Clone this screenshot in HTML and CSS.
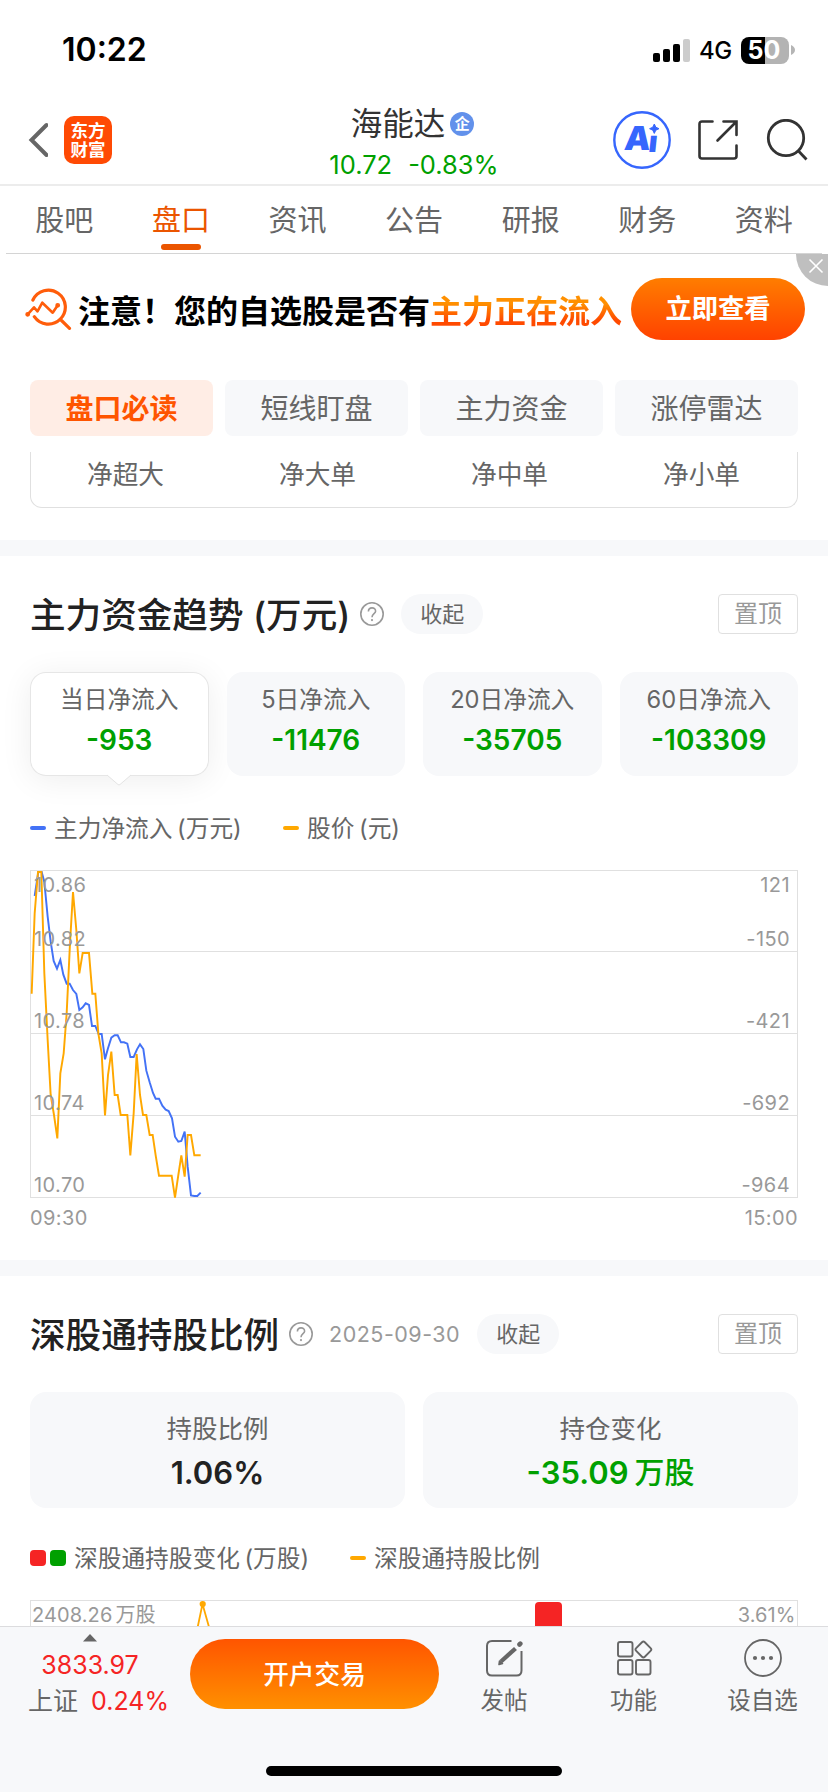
FILE: index.html
```html
<!DOCTYPE html>
<html lang="zh-CN">
<head>
<meta charset="utf-8">
<title>海能达</title>
<link rel="stylesheet" href="styles.css">
</head>
<body>
<div class="app">
  <div class="status">
    <span class="clock">10:22</span>
    <div class="status-right">
      <svg class="signal" width="38" height="24" viewBox="0 0 38 24"><rect x="0" y="14" width="7" height="9" rx="2"/><rect x="10" y="10" width="7" height="13" rx="2"/><rect x="20" y="5" width="7" height="18" rx="2"/><rect x="30" y="0" width="7" height="23" rx="2" fill="#ccc"/></svg>
      <span class="net">4G</span>
      <span class="battery">50</span>
      <svg class="tip" width="4" height="10" viewBox="0 0 4 10"><path d="M0 0Q4 2 4 5T0 10z" fill="#b5b5b5"/></svg>
    </div>
  </div>

  <header class="nav">
    <div class="nav-left">
      <svg width="20" height="36" viewBox="0 0 20 36" fill="none" stroke="#666" stroke-width="4" stroke-linecap="round"><path d="M18.500 3L3.500 18 18.500 33" stroke-linejoin="miter"/></svg>
      <div class="logo"><span>东方</span><span>财富</span></div>
    </div>
    <div class="nav-title">
      <div class="name">海能达<span class="badge">企</span></div>
      <div class="quote"><span>10.72</span><span>-0.83%</span></div>
    </div>
    <div class="nav-right">
      <svg class="ai" width="58" height="58" viewBox="0 0 58 58"><circle cx="29" cy="29" r="27.700" fill="#fff" stroke="#3666fd" stroke-width="2.400"/><text class="ai-text" transform="translate(10.500 39) skewX(-6)"><tspan x="0">A</tspan><tspan class="ai-i" x="24.500" dy="1.500">ı</tspan></text><path d="M41.300 13l1.500 3.200 3.200 1.500-3.200 1.500-1.500 3.200-1.500-3.200-3.200-1.500 3.200-1.500z" fill="#3666fd" stroke="#3666fd" stroke-linejoin="round"/></svg>
      <svg class="share" width="40" height="40" viewBox="0 0 40 40" fill="none" stroke="#333" stroke-width="2.600" stroke-linecap="round"><path d="M14.500 1.500H4Q1.500 1.500 1.500 4V36Q1.500 38.500 4 38.500H36Q38.500 38.500 38.500 36V25.500M25.500 1.500H38.500V15M38 2L19.500 20.500"/></svg>
      <svg class="search" width="42" height="42" viewBox="0 0 42 42" fill="none" stroke="#333" stroke-width="2.800"><circle cx="20" cy="19" r="17.700"/><path d="M32.500 32L40.500 40.500"/></svg>
    </div>
  </header>

  <nav class="tabs">
    <span>股吧</span><span class="on">盘口</span><span>资讯</span><span>公告</span><span>研报</span><span>财务</span><span>资料</span>
  </nav>

  <div class="banner">
    <svg class="scan" width="47" height="44" viewBox="0 0 47 44" fill="none" stroke="#ff5d0b" stroke-width="3.200" stroke-linecap="round"><path d="M7.900 12A17 17 0 1 1 9.300 28.700M35.500 31.500L44.500 40.300"/><path d="M2.700 26.300L9 19.300l3.500 4L17.300 14.700l10.400 10L32.700 17.300" stroke-width="2.600" stroke-linejoin="round"/><circle cx="2.700" cy="26.300" r=".8"/><circle cx="32.700" cy="17.300" r=".8"/></svg>
    <p class="banner-text">注意！您的自选股是否有<em>主力正在流入</em></p>
    <span class="banner-btn">立即查看</span>
    <span class="close"><svg width="16" height="16" viewBox="0 0 16 16" stroke="#fff" stroke-width="1.600"><path d="M1.500 1.500l13 13M14.500 1.500l-13 13"/></svg></span>
  </div>

  <div class="pills"><span class="on">盘口必读</span><span>短线盯盘</span><span>主力资金</span><span>涨停雷达</span></div>
  <div class="orders"><span>净超大</span><span>净大单</span><span>净中单</span><span>净小单</span></div>

  <div class="gap"></div>

  <section class="flow">
    <div class="head">
      <h2>主力资金趋势 (万元)</h2>
      <svg class="help" width="24" height="24" viewBox="0 0 24 24"><circle cx="12" cy="12" r="11.200"/><path d="M8.400 9.600C8.400 4.600 15.700 4.700 15.600 9.200 15.500 11.600 12 11.800 12 15.200"/><circle class="dot" cx="12" cy="18.100" r="1.100"/></svg>
      <span class="fold">收起</span>
      <span class="pin">置顶</span>
    </div>
    <div class="cards">
      <div class="card on"><span>当日净流入</span><b>-953</b><svg class="arrow" width="26" height="12" viewBox="0 0 26 12"><path d="M0 0H26L14 10.500Q13 11.500 12 10.500z" fill="#fff"/><path d="M1 1L12 10.500Q13 11.300 14 10.500L25 1" fill="none" stroke="#e4e4e4"/></svg></div>
      <div class="card"><span>5日净流入</span><b>-11476</b></div>
      <div class="card"><span>20日净流入</span><b>-35705</b></div>
      <div class="card"><span>60日净流入</span><b>-103309</b></div>
    </div>
    <div class="legend"><i class="dash blue"></i><span class="l1">主力净流入 (万元)</span><i class="dash orange"></i><span>股价 (元)</span></div>
    <svg class="chart" width="768" height="364" viewBox="30 870 768 364">
      <path d="M30 870.500H798M30 951.500H798M30 1033.500H798M30 1115.500H798M30 1197.500H798M30.500 870V1198M797.500 870V1198" stroke="#e0e0e0" fill="none"/>
      <g transform="translate(0 850) scale(.33333)" fill="none" stroke-width="5.800">
        <polyline stroke="#4372f6" points="104,138 115,66 125,66 133,96 143,200 152,275 161,333 171,356 181,330 190,374 200,401 209,401 219,420 229,432 238,480 248,472 257,460 267,465 276,528 286,528 296,552 305,552 315,628 324,595 334,563 344,556 353,556 363,577 372,577 382,581 391,621 401,621 411,598 420,583 430,597 439,662 449,697 459,729 467,746 477,746 487,767 497,779 506,783 516,805 525,860 535,875 544,873 554,845 563,950 573,1036 583,1038 592,1038 602,1028"/>
        <polyline stroke="#ffa800" points="95,431 104,190 114,66 124,66 133,370 143,570 152,735 162,795 172,865 181,670 191,610 200,490 210,280 219,126 229,240 238,370 248,309 267,309 277,431 286,431 295,550 305,610 315,796 324,675 334,605 344,735 353,735 362,795 382,795 391,916 401,790 410,612 420,735 429,795 439,795 449,855 458,855 467,916 477,977 515,977 525,1043 535,975 544,916 554,980 563,855 573,855 583,916 602,916"/>
      </g>
      <g class="axis">
        <text x="34" y="892">10.86</text><text x="34" y="946">10.82</text><text x="34" y="1028">10.78</text><text x="34" y="1110">10.74</text><text x="34" y="1192">10.70</text><text x="30" y="1225">09:30</text>
        <g text-anchor="end"><text x="790" y="892">121</text><text x="790" y="946">-150</text><text x="790" y="1028">-421</text><text x="790" y="1110">-692</text><text x="790" y="1192">-964</text><text x="798" y="1225">15:00</text></g>
      </g>
    </svg>
  </section>

  <div class="gap"></div>

  <section class="hold">
    <div class="head">
      <h2>深股通持股比例</h2>
      <svg class="help" width="24" height="24" viewBox="0 0 24 24"><circle cx="12" cy="12" r="11.200"/><path d="M8.400 9.600C8.400 4.600 15.700 4.700 15.600 9.200 15.500 11.600 12 11.800 12 15.200"/><circle class="dot" cx="12" cy="18.100" r="1.100"/></svg>
      <span class="date">2025-09-30</span>
      <span class="fold">收起</span>
      <span class="pin">置顶</span>
    </div>
    <div class="cards wide">
      <div class="card"><span>持股比例</span><b class="dark">1.06%</b></div>
      <div class="card"><span>持仓变化</span><b>-35.09<small>万股</small></b></div>
    </div>
    <div class="legend"><i class="sq red"></i><i class="sq green"></i><span class="l2">深股通持股变化 (万股)</span><i class="dash orange"></i><span>深股通持股比例</span></div>
    <svg class="chart" width="768" height="26" viewBox="30 1600 768 26">
      <path d="M30 1600.500H798M30.500 1600V1626M797.500 1600V1626" stroke="#e0e0e0" fill="none"/>
      <path d="M197.700 1627L202.500 1604 209 1627" stroke="#ffa800" stroke-width="1.800" fill="none"/><circle cx="202.700" cy="1604" r="3.100" fill="#ffa800"/>
      <rect x="535" y="1602" width="27" height="40" rx="4" fill="#f52424"/>
      <g class="axis low"><text x="32" y="1622">2408.26<tspan dx="3">万股</tspan></text><text x="795.500" y="1622" text-anchor="end">3.61%</text></g>
    </svg>
  </section>

  <footer class="bottom">
    <div class="index">
      <svg width="14" height="8" viewBox="0 0 14 8"><path d="M7 0l7 7.500H0z" fill="#666"/></svg>
      <span class="pts">3833.97</span>
      <span class="chg"><em>上证</em><span>0.24%</span></span>
    </div>
    <span class="trade">开户交易</span>
    <div class="act post"><svg width="38" height="38" viewBox="0 0 38 38" fill="none" stroke="#666" stroke-width="2"><path d="M26.500 2H7Q2 2 2 7V31.500Q2 36.500 7 36.500H31.500Q36.500 36.500 36.500 31.500V12"/><path d="M16 22.500L30.500 9.500" stroke-width="4.300"/><path d="M14 25.500l.500-3.500 3 2.500z" fill="#666" stroke-width="1.600" stroke-linejoin="round"/><path d="M34.500 5.500l.800-.800" stroke-width="4.600" stroke-linecap="round"/></svg><span>发帖</span></div>
    <div class="act func"><svg width="38" height="38" viewBox="0 0 38 38" fill="none" stroke="#666" stroke-width="1.900"><rect x="3" y="3" width="14.500" height="14.500" rx="2"/><rect x="3" y="21" width="14.500" height="14.500" rx="2"/><rect x="21" y="21" width="14.500" height="14.500" rx="2"/><rect x="-6.100" y="-6.100" width="12.200" height="12.200" rx="2" transform="translate(28.400 10.500) rotate(45)"/></svg><span>功能</span></div>
    <div class="act fav"><svg width="38" height="38" viewBox="0 0 38 38"><circle cx="19" cy="19" r="18" fill="none" stroke="#666" stroke-width="1.800"/><g fill="#666"><circle cx="11" cy="19" r="2.100"/><circle cx="19" cy="19" r="2.100"/><circle cx="27" cy="19" r="2.100"/></g></svg><span>设自选</span></div>
    <span class="home"></span>
  </footer>
</div>
</body>
</html>
```
FILE: styles.css
```css
* { box-sizing: border-box; }
body { margin: 0; background: #fff; font-family: Inter, "Noto Sans CJK SC", sans-serif; color: #666; }
em, i { font-style: normal; }
svg { display: block; flex: none; }
.app { width: 828px; height: 1792px; overflow: hidden; display: flex; flex-direction: column; white-space: nowrap; }
.app > * { flex: none; }

.status { height: 88px; padding: 12px 33px 0 62px; display: flex; justify-content: space-between; color: #000; }
.clock { font-size: 32px; font-weight: 600; line-height: 76px; }
.status-right { display: flex; align-items: center; height: 76px; }
.net { font-size: 24px; font-weight: 500; margin-left: 8px; width: 42px; letter-spacing: -.5px; padding-top: 1px; }
.battery { width: 48px; height: 27px; border-radius: 8px; background: linear-gradient(90deg, #000 50%, #b3b3b3 50%); color: #fff; font-size: 25px; font-weight: 700; line-height: 27px; text-align: center; padding-right: 2px; }
.tip { margin-left: 2px; }
.signal { margin-top: 1px; }

.nav { height: 98px; border-bottom: 2px solid #ececec; display: grid; grid-template-columns: 1fr 240px 1fr; grid-template-rows: 96px; }
.nav-left { display: flex; align-items: center; padding: 8px 0 0 28px; gap: 16px; }
.logo { width: 48px; height: 48px; border-radius: 10px; background: #ff4a04; color: #fff; font-weight: 700; font-size: 17.500px; line-height: 19.500px; display: flex; flex-direction: column; align-items: center; justify-content: center; }
.nav-title { display: flex; flex-direction: column; align-items: center; padding-top: 15px; }
.name { display: flex; align-items: center; font-size: 31.500px; line-height: 42px; color: #333; gap: 5px; margin-right: 3px; }
.badge { width: 24px; height: 24px; border-radius: 50%; background: #6291eb; color: #fff; font-size: 15px; font-weight: 700; line-height: 24px; text-align: center; }
.quote { display: flex; gap: 16px; font-size: 25.500px; line-height: 46px; margin-top: -3px; color: #00a000; }
.nav-right { display: flex; align-items: center; justify-content: flex-end; padding: 8px 20px 0 0; }
.ai-text { font: 900 33px Inter, sans-serif; fill: #3666fd; }
.ai-i { font-size: 30px; }
.share { margin-left: 27px; }
.search { margin-left: 28px; }

.tabs { height: 68px; margin: 0 6px; border-bottom: 1px solid #d4d4d4; display: grid; grid-template-columns: repeat(7, 116.600px); font-size: 29px; line-height: 70px; text-align: center; }
.tabs span { display: flex; flex-direction: column; align-items: center; height: 67px; }
.tabs .on { color: #eb5500; }
.tabs .on::after { content: ""; flex: none; width: 40px; height: 6px; border-radius: 3px; background: #eb5500; margin-top: -12px; }

.banner { height: 126px; position: relative; display: flex; align-items: flex-start; padding: 24px 23px 0 25px; }
.scan { margin-top: 10px; }
.banner-text { margin: 0 0 0 6px; width: 553px; font-size: 32px; font-weight: 700; line-height: 67px; color: #000; }
.banner-text em { background: linear-gradient(#ff9000 30%, #ff4a00 72%); background-clip: text; -webkit-background-clip: text; color: transparent; }
.banner-btn { width: 174px; height: 62px; border-radius: 31px; background: linear-gradient(#ff7d00, #ff4200); color: #fff; font-weight: 700; font-size: 26.300px; line-height: 61px; text-align: center; }
.close { position: absolute; right: 0; top: 0; width: 32px; height: 32px; border-radius: 0 0 0 32px; background: #bfbfbf; padding: 4px 0 0 12px; }

.pills { display: grid; grid-template-columns: repeat(4, 183px); gap: 12px; padding-left: 30px; height: 72px; }
.pills span { height: 56px; border-radius: 8px; background: #f7f8fa; font-size: 28px; line-height: 58px; text-align: center; }
.pills .on { background: #ffede5; color: #ff5500; font-weight: 700; }
.orders { margin: 0 30px 32px; height: 56px; border: 1px solid #e0e0e0; border-top: 0; border-radius: 0 0 12px 12px; display: grid; grid-template-columns: repeat(4, 192px); font-size: 25.700px; line-height: 46px; text-align: center; }
.orders span { margin-left: -3px; }
.gap { height: 16px; background: #f7f8fa; }

.flow { height: 704px; padding: 38px 30px 0; }
.hold { height: 350px; padding: 38px 30px 0; }
.head { display: flex; align-items: center; height: 40px; }
.head h2 { margin: 0; font-size: 35.600px; font-weight: 500; line-height: 40px; padding-top: 3px; color: #222; }
.help { margin-left: 10px; fill: none; stroke: #999; stroke-width: 1.600; }
.help .dot { fill: #999; stroke: none; }
.fold { width: 82px; height: 40px; border-radius: 20px; background: #f7f8fa; margin-left: 17px; font-size: 22px; line-height: 40px; text-align: center; }
.pin { width: 80px; height: 40px; margin-left: auto; border: 1px solid #e0e0e0; border-radius: 4px; color: #999; font-size: 24px; line-height: 38px; text-align: center; }
.date { font-size: 21.500px; letter-spacing: .5px; color: #999; margin-left: 16px; }
.cards { display: grid; grid-template-columns: repeat(4, 1fr); gap: 18px; margin-top: 38px; }
.card { height: 104px; border-radius: 16px; background: #f7f8fa; display: flex; flex-direction: column; align-items: center; padding-top: 10px; position: relative; }
.card span { font-size: 23.700px; line-height: 36px; }
.card b { font-size: 28px; font-weight: 600; line-height: 45px; color: #00a000; }
.card.on { background: #fff; box-shadow: inset 0 0 0 1px #e6e6e6, 0 4px 32px rgba(0,0,0,.07); }
.arrow { position: absolute; left: 76px; top: 102px; }
.wide { grid-template-columns: repeat(2, 1fr); }
.wide .card { height: 116px; padding-top: 18px; }
.wide span { font-size: 25.500px; line-height: 38px; }
.wide b { font-size: 31px; line-height: 49px; display: flex; }
.wide small { font-size: 30px; font-weight: 500; margin-left: 6px; }
.wide .dark { color: #222; }

.legend { display: flex; align-items: center; height: 32px; margin-top: 36px; font-size: 23.700px; line-height: 32px; word-spacing: -2px; }
.legend span { padding-top: 2px; }
.wide + .legend { margin-top: 34px; }
.dash { width: 16px; height: 4px; border-radius: 2px; margin-right: 8px; }
.blue { background: #4372f6; }
.orange { background: #ffa800; }
.l1 { width: 229px; }
.sq { width: 16px; height: 16px; border-radius: 4px; margin-right: 4px; }
.sq + span { margin-left: 4px; }
.red { background: #f52424; }
.green { background: #00a000; }
.l2 { width: 276px; }
.flow .chart { margin-top: 26px; }
.hold .chart { margin-top: 26px; }
.axis { font-size: 20px; letter-spacing: .4px; fill: #999; }
.low { letter-spacing: .1px; }

.bottom { height: 166px; background: #f7f8fa; border-top: 1px solid #dcdcde; position: relative; display: flex; }
.index { width: 190px; padding: 7px 10px 0 0; display: flex; flex-direction: column; align-items: center; }
.pts { font-size: 25px; line-height: 46px; color: #f52424; }
.chg { display: flex; gap: 13px; padding-left: 17px; font-size: 25px; line-height: 26px; }
.chg span { color: #f52424; }
.trade { width: 249px; height: 70px; margin-top: 12px; border-radius: 35px; background: linear-gradient(#ff5500, #ff9000); color: #fff; font-size: 25.700px; font-weight: 500; line-height: 71px; text-align: center; }
.act { display: flex; flex-direction: column; align-items: center; padding-top: 12px; font-size: 23.500px; line-height: 36px; width: 129px; }
.act span { margin-top: 6px; }
.post { width: 130px; }
.home { position: absolute; left: 266px; bottom: 16px; width: 296px; height: 10px; border-radius: 5px; background: #000; }
```
